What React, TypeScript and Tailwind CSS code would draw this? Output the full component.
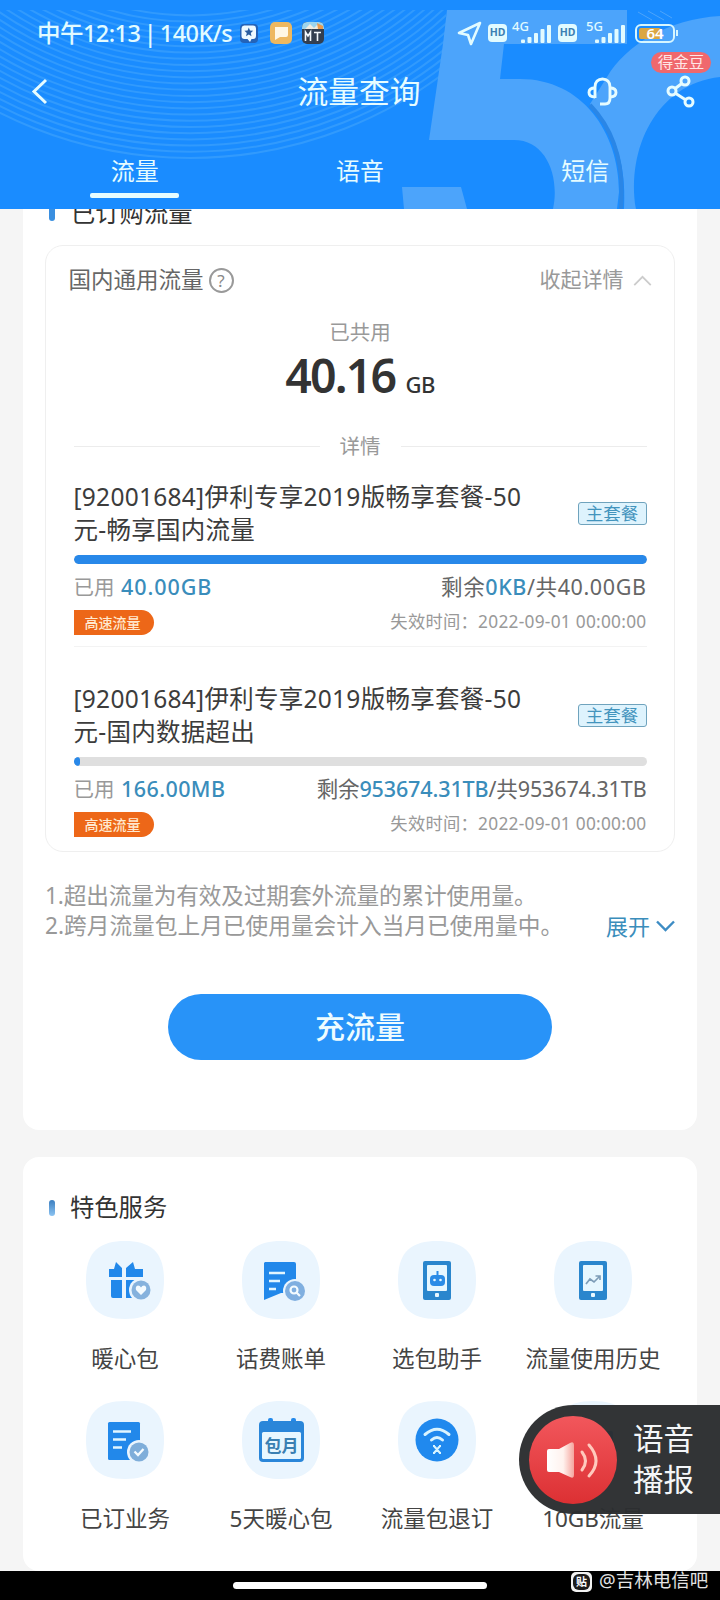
import type { ReactNode } from 'react'

interface Plan {
  title: [string, string]
  used: string
  usedTracking: string
  left: string
  total: string
  totalTracking: string
  percent: number
}

interface Service {
  label: string
  icon: ReactNode
}

const plans: Plan[] = [
  {
    title: ['[92001684]伊利专享2019版畅享套餐-50', '元-畅享国内流量'],
    used: '40.00GB',
    usedTracking: 'tracking-[0.9px]',
    left: '0KB',
    total: '40.00GB',
    totalTracking: 'tracking-[0.6px]',
    percent: 100,
  },
  {
    title: ['[92001684]伊利专享2019版畅享套餐-50', '元-国内数据超出'],
    used: '166.00MB',
    usedTracking: 'tracking-[0.4px]',
    left: '953674.31TB',
    total: '953674.31TB',
    totalTracking: 'tracking-[-0.12px]',
    percent: 1.1,
  },
]

const rings = Array.from({ length: 24 }, (_, i) => 423 - i * 6.2)

function HeaderArt() {
  return (
    <svg className="absolute inset-0" width="720" height="209" viewBox="0 0 720 209" fill="none">
      <defs>
        <clipPath id="art">
          <rect y="10" width="446" height="199" />
        </clipPath>
      </defs>
      <g clipPath="url(#art)" stroke="#54b0fb" strokeWidth="2" opacity="0.4">
        {rings.map((r) => (
          <circle key={r} cx="190" cy="-265" r={r} />
        ))}
      </g>
      <g fill="#4ca4fb">
        <path d="M447 10H627V44H504L500 79H520C582 79 619 132 619 192L617 209H553C560 176 546 140 514 140H429L443 44Z" />
        <path d="M402 187H461L467 209H404Z" />
        <path d="M720 16C668 19 626 45 607 77L590 104C612 126 627 160 624 209H636C626 150 656 84 720 77Z" />
      </g>
      <path d="M590 105C612 128 625 162 621 209" stroke="#2a86e6" strokeWidth="4" />
      <path d="M638 12L652 20M648 11L664 20M660 11L672 18" stroke="#4ca4fb" />
    </svg>
  )
}

function Signal({ type }: { type: string }) {
  return (
    <div className="relative h-[22px] w-[40px]">
      <span className="absolute left-0 -top-[3px] text-[13px] leading-[14px] font-medium">{type}</span>
      <svg className="absolute bottom-0 right-0" width="31" height="20" viewBox="0 0 31 20" fill="#e2fbff">
        <rect x="0" y="15.500" width="4" height="3.500" rx="1" />
        <rect x="6.500" y="13" width="4" height="6" rx="1" />
        <rect x="13" y="9" width="4" height="10" rx="1" />
        <rect x="19.500" y="5" width="4" height="14" rx="1" />
        <rect x="26" y="1" width="4" height="18" rx="1" />
      </svg>
    </div>
  )
}

function Hd() {
  return (
    <span className="flex h-[18px] w-[19px] items-center justify-center rounded-[4px] bg-[#e2fbff] text-[10.5px] font-bold text-[#3c7fb4]">
      HD
    </span>
  )
}

function StatusBar() {
  return (
    <div className="relative flex h-[66px] items-center pl-[37px] text-[#e2fbff]">
      <span className="w-[200px] whitespace-nowrap text-[23.5px] leading-[30px] tracking-[-0.55px] font-medium [word-spacing:-2px]">
        中午12:13 | 140K/s
      </span>
      <svg className="ml-[3px]" width="18" height="19" viewBox="0 0 18 19">
        <rect width="18" height="19" rx="4" fill="#2463b8" />
        <path d="M4 1.500H13A3 3 0 0 1 16 4.500V12A3 3 0 0 1 13 15H11.500L10 18L7.500 15H4.500A3 3 0 0 1 1.500 12V4.500A3 3 0 0 1 4 1.500Z" fill="#effaff" />
        <path d="M8.800 3.500L10 6.500L13.200 6.800L10.800 9L11.500 12.200L8.800 10.500L6 12.200L6.800 9L4.400 6.800L7.600 6.500Z" fill="#2a5d9f" />
      </svg>
      <svg className="ml-[12px]" width="22" height="22" viewBox="0 0 22 22">
        <rect width="22" height="22" rx="5" fill="#eeb860" />
        <path d="M5 5H18V13Q18 15 16 15H10L5 18Z" fill="#fff7e5" />
      </svg>
      <svg className="ml-[10px]" width="22" height="22" viewBox="0 0 22 22">
        <rect width="22" height="22" rx="5" fill="#333f50" />
        <path d="M5 0H17Q22 0 22 6V7H0V6Q0 0 5 0Z" fill="#9bd4ee" />
        <path d="M3 7L8 2L12 6L15 3L21 7Z" fill="#f0ece0" />
        <path d="M15 1L21 4V7H16Z" fill="#e89b4f" />
        <path d="M3.500 19V10L6 14L8.500 10V19M12 10.500H19M15.500 10.500V19" stroke="#f3f8fc" strokeWidth="1.600" fill="none" />
      </svg>
      <svg className="ml-[133px]" width="25" height="25" viewBox="0 0 25 25" fill="none" stroke="#e2fbff" strokeWidth="2.600" strokeLinejoin="round">
        <path d="M23 2L2 12L11 14L14 23Z" />
      </svg>
      <div className="ml-[6px] flex items-center gap-[5px]">
        <Hd />
        <Signal type="4G" />
        <span className="ml-[1px] flex"><Hd /></span>
        <span className="ml-[4px] flex"><Signal type="5G" /></span>
      </div>
      <div className="ml-[9px] flex items-center">
        <div className="relative flex h-[19px] w-[40px] items-center justify-center rounded-[6px] border-2 border-[#d6f6ff]">
          <span className="absolute left-[2px] top-[2px] h-[11px] w-[22px] rounded-[2px] bg-[#dba642]" />
          <span className="relative text-[15px] leading-none font-semibold text-white">64</span>
        </div>
        <span className="ml-[1px] h-[6px] w-[2px] bg-[#d6f6ff]" />
      </div>
    </div>
  )
}

function Header() {
  return (
    <header className="relative h-[209px] shrink-0 bg-[#1a8cff] text-[#e6fcff]">
      <HeaderArt />
      <StatusBar />
      <div className="relative flex h-[50px] items-center justify-center">
        <svg className="absolute left-[31px] top-[12px]" width="17" height="27" viewBox="0 0 17 27" fill="none" stroke="#e6fcff" strokeWidth="3">
          <path d="M15 2L3 13.500L15 25" />
        </svg>
        <h1 className="-ml-[2px] text-[30.8px] leading-[40px]">流量查询</h1>
        <svg className="absolute left-[587px] top-[11px]" width="31" height="30" viewBox="0 0 31 30" fill="none" stroke="#e6fcff" strokeWidth="2.900">
          <path d="M8 21V10C8 5 11 2 15.500 2S23 5 23 10V21C23 25 21 27 18 27H13" />
          <path d="M8 11Q2 11 2 15.500T8 20M23 11Q29 11 29 15.500T23 20" />
        </svg>
        <svg className="absolute left-[666px] top-[9px]" width="30" height="34" viewBox="0 0 30 34" fill="none" stroke="#e6fcff" strokeWidth="3">
          <circle cx="19" cy="6" r="4" />
          <circle cx="6" cy="16" r="4" />
          <circle cx="23" cy="27" r="4" />
          <path d="M15.800 8.500L9.200 13.500M9.400 18.300L19.500 24.800" />
        </svg>
        <span className="absolute left-[651px] -top-[14px] flex h-[21px] w-[60px] items-center justify-center rounded-full bg-[#f0686d] text-[15.500px] text-[#ffe6e6]">
          得金豆
        </span>
      </div>
      <nav className="relative mx-[22px] grid h-[82px] grid-cols-3 text-center text-[24px] leading-[32px]">
        <div className="flex flex-col items-center pt-[39px]">
          流量
          <span className="mt-[6px] h-[5px] w-[89px] shrink-0 rounded-[2px] bg-[#e6fcff]" />
        </div>
        <div className="pt-[39px]">语音</div>
        <div className="pt-[39px]">短信</div>
      </nav>
    </header>
  )
}

function PlanItem({ plan }: { plan: Plan }) {
  return (
    <div>
      <div className="flex h-[65px] items-center justify-between">
        <div className="whitespace-nowrap text-[24.5px] leading-[32.5px] tracking-[0.27px] text-[#3c3c3c]">
          <p>{plan.title[0]}</p>
          <p>{plan.title[1]}</p>
        </div>
        <span className="flex h-[23px] w-[69px] items-center justify-center rounded-[3px] border border-[#6fa3bd] bg-[#def3fd] text-[17.5px] leading-none text-[#4394bd]">
          主套餐
        </span>
      </div>
      <div className="mt-[9px] h-[9px] overflow-hidden rounded-full bg-[#dfdfdf]">
        <div className="h-full rounded-full bg-[#2888e9]" style={{ width: `${plan.percent}%` }} />
      </div>
      <div className="mt-[10px] flex h-[26px] items-center justify-between whitespace-nowrap text-[21.5px] text-[#666]">
        <p>
          <span className="mr-[1px] text-[20.5px] text-[#999]">已用</span>{' '}
          <span className={`font-medium text-[#3a8dbb] ${plan.usedTracking}`}>{plan.used}</span>
        </p>
        <p className={plan.totalTracking}>
          剩余<span className="font-medium text-[#3a8dbb]">{plan.left}</span>/共{plan.total}
        </p>
      </div>
      <div className="mt-[10px] flex h-[24px] items-center justify-between">
        <span className="flex h-[25px] w-[80px] items-center rounded-r-full bg-[#ed6718] pl-[11px] text-[14px] font-medium text-[#ffe9cf]">
          高速流量
        </span>
        <span className="text-[17.3px] tracking-[0.27px] text-[#999]">失效时间：2022-09-01 00:00:00</span>
      </div>
    </div>
  )
}

const PhoneFrame = ({ children }: { children: ReactNode }) => (
  <>
    <rect x="25" y="20" width="28" height="39" rx="2" fill="#2a86cd" />
    <rect x="29" y="24" width="20" height="26" rx="1" fill="#e7f7ff" />
    <rect x="37" y="52" width="4" height="4" rx="1" fill="#e7f7ff" />
    {children}
  </>
)

const services: Service[] = [
  {
    label: '暖心包',
    icon: (
      <>
        <path d="M23 28H28L30 21L36 27V36H23ZM40 36V27L47 21L49 28H57V36H40ZM25 39H36V57H27Q25 57 25 55ZM40 39H54V57H40Z" fill="#2288ea" />
        <circle cx="55" cy="49" r="12" fill="#eaf5fe" />
        <circle cx="55" cy="49" r="9.500" fill="#86b2dd" />
        <path d="M55 54L50 49Q49 45 52 44.500Q54 44.500 55 46.500Q56 44.500 58 44.500Q61 45 60 49Z" fill="#f4fbff" />
      </>
    ),
  },
  {
    label: '话费账单',
    icon: (
      <>
        <path d="M23 21H52Q54 21 54 23V52H46L39 52L22 59V22Z" fill="#2288ea" />
        <path d="M27 32H43M27 40H38M27 48H34" stroke="#e2f6ff" strokeWidth="2.500" />
        <circle cx="53" cy="50" r="12" fill="#eaf5fe" />
        <circle cx="53" cy="50" r="10" fill="#80afe0" />
        <circle cx="52" cy="49" r="3.500" fill="none" stroke="#f4fbff" strokeWidth="2.200" />
        <path d="M54.500 51.500L58 55" stroke="#f4fbff" strokeWidth="2.200" />
      </>
    ),
  },
  {
    label: '选包助手',
    icon: (
      <PhoneFrame>
        <rect x="32" y="34" width="15" height="11" rx="4" fill="#2b8ce6" />
        <path d="M39.500 30V35" stroke="#2b8ce6" strokeWidth="2" />
        <circle cx="36.500" cy="39" r="1.300" fill="#e7f7ff" />
        <circle cx="42.500" cy="39" r="1.300" fill="#e7f7ff" />
      </PhoneFrame>
    ),
  },
  {
    label: '流量使用历史',
    icon: (
      <PhoneFrame>
        <path d="M32 43L36 38L40 41L46 35M41.500 35H46V39" fill="none" stroke="#7d9db8" strokeWidth="1.700" />
      </PhoneFrame>
    ),
  },
  {
    label: '已订业务',
    icon: (
      <>
        <rect x="22" y="21" width="32" height="38" rx="1.500" fill="#2288ea" />
        <path d="M27 30.500H45M27 38.500H40M27 46.500H36" stroke="#e2f6ff" strokeWidth="2.600" />
        <circle cx="53" cy="51" r="12" fill="#eaf5fe" />
        <circle cx="53" cy="51" r="9.500" fill="#7faeda" />
        <path d="M48.500 50.500L52 54L57.500 48" fill="none" stroke="#f4fbff" strokeWidth="2.300" />
      </>
    ),
  },
  {
    label: '5天暖心包',
    icon: (
      <>
        <rect x="26" y="17" width="5" height="8" rx="2" fill="#2288ea" />
        <rect x="49" y="17" width="5" height="8" rx="2" fill="#2288ea" />
        <rect x="17" y="20" width="45" height="41" rx="4" fill="#2a86d9" />
        <rect x="20" y="31" width="39" height="27" rx="1.500" fill="#e7f7ff" />
        <text x="39.500" y="51" textAnchor="middle" fontSize="17" fontWeight="700" fill="#3a80b2">
          包月
        </text>
      </>
    ),
  },
  {
    label: '流量包退订',
    icon: (
      <>
        <circle cx="39" cy="39" r="21.500" fill="#2089ee" />
        <path d="M27 33.500Q39 23 51 33.500M33.500 39Q39 34 44.500 39" fill="none" stroke="#d9f4ff" strokeWidth="3" strokeLinecap="round" />
        <path d="M36 45L42 52M42 45L36 52M35 45H37M41 45H43M35 52H37M41 52H43" stroke="#d9f4ff" strokeWidth="2" />
      </>
    ),
  },
  {
    label: '10GB流量',
    icon: <rect x="22" y="30" width="37" height="28" rx="2" fill="#2288ea" />,
  },
]

function ServiceTile({ service }: { service: Service }) {
  return (
    <div className="flex flex-col items-center">
      <svg width="78" height="78" viewBox="0 0 78 78">
        <path d="M39 0C66 0 78 12 78 39S66 78 39 78S0 66 0 39S12 0 39 0Z" fill="#eaf5fe" />
        {service.icon}
      </svg>
      <span className="mt-[25px] whitespace-nowrap text-[22.5px] leading-[30px] text-[#444]">{service.label}</span>
    </div>
  )
}

function VoiceButton() {
  return (
    <div className="absolute right-0 top-[1405px] flex h-[109px] w-[201px] items-center rounded-l-full bg-[#2b2d2f]/97 pl-[10px]">
      <svg width="88" height="88" viewBox="0 0 88 88" fill="none">
        <defs>
          <linearGradient id="red" x1="0" y1="0" x2="0" y2="1">
            <stop stopColor="#f2575c" />
            <stop offset="1" stopColor="#dc3033" />
          </linearGradient>
          <linearGradient id="horn">
            <stop stopColor="#fff" />
            <stop offset="0.600" stopColor="#fff2ee" />
            <stop offset="1" stopColor="#f5a59e" />
          </linearGradient>
        </defs>
        <circle cx="44" cy="44" r="44" fill="url(#red)" />
        <path d="M20 33H30L41 27Q45 25 45 29V59Q45 63 41 61L30 56H20Q18 56 18 54V35Q18 33 20 33Z" fill="url(#horn)" />
        <path d="M53 36Q60 45 53 54M60 29Q74 45 60 60" stroke="#ffc9bd" strokeWidth="3" strokeLinecap="round" />
      </svg>
      <span className="mb-[1px] ml-[16px] w-[64px] text-[30.5px] leading-[41px] text-[#f4f6f8]">语音播报</span>
    </div>
  )
}

export default function App() {
  return (
    <div
      lang="zh-CN"
      className="relative flex h-[1600px] w-[720px] flex-col overflow-hidden bg-[#f5f5f5] font-['Noto_Sans','Noto_Sans_CJK_SC',sans-serif]"
    >
      <Header />

      <main className="flex min-h-0 flex-1 flex-col gap-[27px] px-[23px]">
        <section className="flex h-[921px] shrink-0 flex-col overflow-hidden rounded-b-[16px] bg-white px-[22px]">
          <div className="-mt-[14px] flex h-[36px] shrink-0 items-center pl-[4px]">
            <span className="h-[16px] w-[6px] rounded-full bg-[#3a8fe0]" />
            <h2 className="ml-[16px] text-[24.3px] leading-[32px] text-[#333]">已订购流量</h2>
          </div>

          <div className="mt-[14px] flex h-[607px] shrink-0 flex-col rounded-[18px] border border-[#efefef] px-[27.5px]">
            <div className="-ml-[5px] flex h-[68px] shrink-0 items-center text-[22.5px] text-[#666]">
              国内通用流量
              <span className="ml-[5px] flex h-[25px] w-[25px] items-center justify-center rounded-full border-2 border-[#999] text-[17px] leading-none text-[#888]">
                ?
              </span>
              <span className="ml-auto text-[21px] text-[#999]">收起详情</span>
              <svg className="-mr-[5px] ml-[9px]" width="19" height="11" viewBox="0 0 20 12" fill="none" stroke="#ccc" strokeWidth="2">
                <path d="M1 11L10 2L19 11" />
              </svg>
            </div>
            <p className="mt-[6px] text-center text-[20.5px] leading-[24px] text-[#999]">已共用</p>
            <p className="mt-[3px] h-[56px] shrink-0 text-center text-[46.5px] leading-[56px] font-semibold tracking-[-1.8px] text-[#333]">
              40.16<span className="ml-[10px] text-[22px] leading-none font-medium tracking-[-0.5px]">GB</span>
            </p>
            <div className="mt-[31px] flex items-center gap-[20px] text-[20.5px] leading-[24px] text-[#999]">
              <span className="h-px flex-1 bg-[#ececec]" />
              详情
              <span className="h-px flex-1 bg-[#ececec]" />
            </div>
            <div className="mt-[23px]">
              <PlanItem plan={plans[0]} />
            </div>
            <div className="mt-[12px] h-px shrink-0 bg-[#f3f3f3]" />
            <div className="mt-[36px]">
              <PlanItem plan={plans[1]} />
            </div>
          </div>

          <div className="mt-[29px] flex items-end justify-between whitespace-nowrap text-[22.7px] leading-[30px] text-[#999]">
            <div>
              <p className="tracking-[-0.17px]">1.超出流量为有效及过期套外流量的累计使用量。</p>
              <p>2.跨月流量包上月已使用量会计入当月已使用量中。</p>
            </div>
            <span className="flex items-center gap-[6px] text-[22px] text-[#3a8dbb]">
              展开
              <svg width="19" height="12" viewBox="0 0 19 12" fill="none" stroke="#3d8cc4" strokeWidth="2.400">
                <path d="M1 1.500L9.500 10L18 1.500" />
              </svg>
            </span>
          </div>

          <button className="mx-auto mt-[53px] h-[66px] w-[384px] shrink-0 rounded-full bg-[#2893f8] text-[30px] leading-[40px] font-medium text-[#eefcff]">
            充流量
          </button>
        </section>

        <section className="h-[414px] shrink-0 rounded-[16px] bg-white pl-[24px] pr-[26px] pt-[35px]">
          <div className="flex h-[30px] items-center">
            <span className="ml-[2px] mt-[2px] h-[16px] w-[6px] rounded-full bg-linear-to-b from-[#3b7fc0] to-[#8cc4f2]" />
            <h2 className="ml-[15px] text-[24.3px] leading-[30px] text-[#333]">特色服务</h2>
          </div>
          <div className="mt-[19px] grid grid-cols-4 gap-y-[27px]">
            {services.map((service) => (
              <ServiceTile key={service.label} service={service} />
            ))}
          </div>
        </section>
      </main>

      <VoiceButton />

      <footer className="relative flex h-[29px] shrink-0 items-center bg-black">
        <span className="ml-[233px] h-[7px] w-[254px] rounded-full bg-white" />
        <span className="mb-[8px] ml-[84px] flex h-[20px] w-[21px] items-center justify-center rounded-[5px] bg-[#f2f2f2]">
          <span className="flex h-[16px] w-[17px] items-center justify-center rounded-[6px] bg-[#1c1c1c] text-[11px] leading-none font-bold text-white">
            贴
          </span>
        </span>
        <span className="mb-[11px] ml-[7px] whitespace-nowrap text-[18.5px] leading-[20px] text-[#e3e3e3]">@吉林电信吧</span>
      </footer>
    </div>
  )
}
